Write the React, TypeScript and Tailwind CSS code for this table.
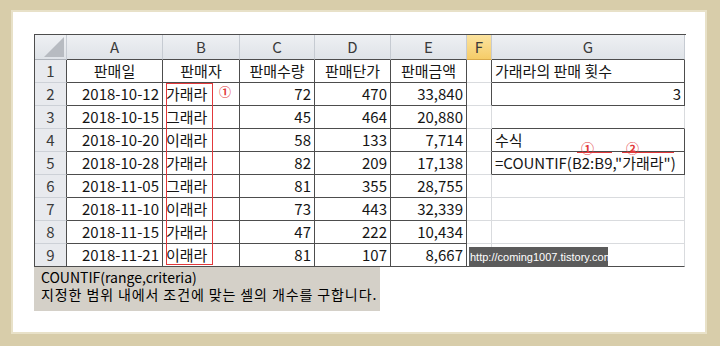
type Align = "left" | "right" | "center";

const heads = ["판매일", "판매자", "판매수량", "판매단가", "판매금액"];

const data = [
  ["2018-10-12", "가래라", "72", "470", "33,840"],
  ["2018-10-15", "그래라", "45", "464", "20,880"],
  ["2018-10-20", "이래라", "58", "133", "7,714"],
  ["2018-10-28", "가래라", "82", "209", "17,138"],
  ["2018-11-05", "그래라", "81", "355", "28,755"],
  ["2018-11-10", "이래라", "73", "443", "32,339"],
  ["2018-11-15", "가래라", "47", "222", "10,434"],
  ["2018-11-21", "이래라", "81", "107", "8,667"],
];

const gCells: Record<number, [string, Align]> = {
  1: ["가래라의 판매 횟수", "left"],
  2: ["3", "right"],
  4: ["수식", "left"],
  5: ['=COUNTIF(B2:B9,"가래라")', "left"],
};

const letters = ["A", "B", "C", "D", "E", "F", "G"];

// cells with the thin dark border drawn in the sheet
const inBox = (r: number, c: number) => {
  if (r < 1 || r > 9 || c > 6) return false;
  if (c <= 4) return true;
  return c === 6 && [1, 2, 4, 5].includes(r);
};

const cellContent = (r: number, c: number): [string, Align] => {
  if (r === 1 && c <= 4) return [heads[c], "center"];
  if (r >= 2 && c <= 4) return [data[r - 2][c], c === 1 ? "left" : "right"];
  if (c === 6 && gCells[r]) return gCells[r];
  return ["", "left"];
};

const Cell = ({ r, c }: { r: number; c: number }) => {
  const [text, align] = cellContent(r, c);
  const rDark = inBox(r, c) || inBox(r, c + 1);
  const bDark = inBox(r, c) || inBox(r + 1, c) || r === 9;
  return (
    <div
      className={`flex items-center overflow-visible whitespace-nowrap border-r border-b text-[15px] leading-[22px] text-[#151515] ${
        rDark ? "border-r-[#4d4d4d]" : "border-r-[#d9dbde]"
      } ${bDark ? "border-b-[#4d4d4d]" : "border-b-[#d9dbde]"} ${
        align === "left" ? "justify-start pl-[3px]" : align === "right" ? "justify-end pr-[3px]" : "justify-center"
      }`}
    >
      {text}
    </div>
  );
};

const App = () => {
  return (
    <div className="h-[346px] w-[720px] bg-[#d8cdaa] pb-[14px] pl-[13px] pr-[15px] pt-[12px] font-['Noto_Sans_CJK_KR','Noto_Sans',sans-serif]">
      <div className="h-full w-full bg-white pl-[21px] pt-[22px] ring-2 ring-[#e8e1c8]">
        <div className="relative w-[652px] border-l border-t border-[#4d4d4d]">
          <div className="grid grid-cols-[32px_96px_77px_75px_76px_76px_25px_193px] grid-rows-[25px_repeat(9,23px)]">
            {/* header row */}
            <div className="flex items-end justify-end border-r border-b border-r-[#c6cbd2] border-b-[#aeb3ba] bg-linear-to-b from-[#eef0f3] to-[#dfe3e8] p-[2px]">
              <svg width="20" height="20" viewBox="0 0 20 20">
                <polygon points="0,20 20,20 20,0" fill="#b7bbc1" />
              </svg>
            </div>
            {letters.map((l, c) =>
              l === "F" ? (
                <div
                  key={l}
                  className="flex items-center justify-center border-r border-b border-r-[#c6cbd2] border-b-[#d9a94a] bg-linear-to-b from-[#fbe39f] to-[#f6cc67] text-[15px] text-[#3a3a3a]"
                >
                  {l}
                </div>
              ) : (
                <div
                  key={l}
                  className={`flex items-center justify-center border-r border-b border-r-[#c6cbd2] border-b-[#4d4d4d] bg-linear-to-b from-[#eef0f3] to-[#dfe3e8] text-[15px] text-[#3a3a3a] ${
                    c === 6 ? "border-r-[#8e9399]" : ""
                  }`}
                >
                  {l}
                </div>
              )
            )}
            {/* body rows */}
            {Array.from({ length: 9 }, (_, i) => i + 1).map((r) => (
              <div key={r} className="contents">
                <div
                  className={`flex items-center justify-center border-r border-b border-r-[#4d4d4d] bg-[#e8eaee] text-[15px] text-[#3a3a3a] ${
                    r === 9 ? "border-b-[#4d4d4d]" : "border-b-[#cdd1d7]"
                  }`}
                >
                  {r}
                </div>
                {letters.map((_, c) => (
                  <Cell key={c} r={r} c={c} />
                ))}
              </div>
            ))}
          </div>

          {/* red marks */}
          <div className="absolute left-[131px] top-[48px] h-[182px] w-[47px] border border-[#e2393b]" />
          <span className="absolute left-[184px] top-[50px] text-[12px] font-bold leading-[14px] text-[#e2393b]">①</span>
          <span className="absolute left-[546px] top-[106px] text-[13px] font-bold leading-[14px] text-[#e2393b]">①</span>
          <div className="absolute left-[542px] top-[117px] h-px w-[35px] bg-[#e2393b]" />
          <span className="absolute left-[591px] top-[106px] text-[13px] font-bold leading-[14px] text-[#e2393b]">②</span>
          <div className="absolute left-[587px] top-[117px] h-px w-[52px] bg-[#e2393b]" />

          {/* watermark */}
          <div className="absolute left-[434px] top-[212px] flex h-[20px] w-[139px] items-center overflow-hidden whitespace-nowrap bg-[#5b5b5b] pl-[1px] font-['Liberation_Sans',sans-serif] text-[11px] text-white">
            http://coming1007.tistory.com
          </div>
        </div>

        <div className="h-[44px] w-[346px] bg-[#d4d0c8] pl-[7px] pt-[2px] text-[14px] leading-[17px] text-black">
          <div>COUNTIF(range,criteria)</div>
          <div className="whitespace-nowrap tracking-[0.9px]">지정한 범위 내에서 조건에 맞는 셀의 개수를 구합니다.</div>
        </div>
      </div>
    </div>
  );
};

export default App;
